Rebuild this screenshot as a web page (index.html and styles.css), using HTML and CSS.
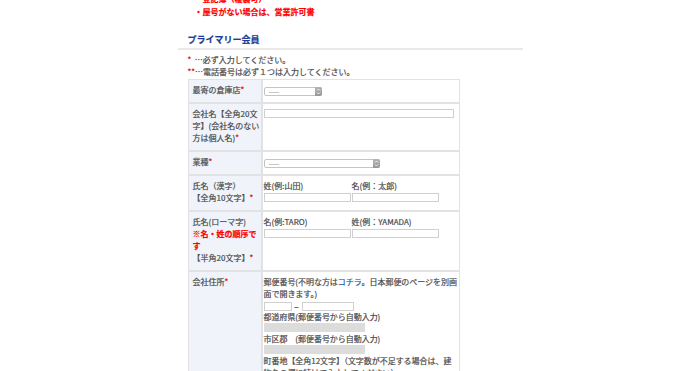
FILE: index.html
```html
<!DOCTYPE html>
<html lang="ja">
<head>
    <meta charset="UTF-8">
    <meta name="viewport" content="width=device-width, initial-scale=1.0">
    <title>会員登録 - プライマリー会員</title>
    <link rel="stylesheet" href="styles.css">
</head>
<body>
    <div class="page">
        <ul class="notice">
            <li>・登記簿（複製可）</li>
            <li>・屋号がない場合は、営業許可書</li>
        </ul>

        <h2 class="section-title">プライマリー会員</h2>

        <div class="notes">
            <p><span class="req">*</span>&nbsp;&nbsp;…必ず入力してください。</p>
            <p><span class="req">**</span>…電話番号は必ず１つは入力してください。</p>
        </div>

        <table class="form-table">
            <colgroup>
                <col class="col-label">
                <col>
            </colgroup>
            <tr>
                <th>最寄の倉庫店<span class="req">*</span></th>
                <td>
                    <span class="select select-short">
                        <select><option>------</option></select>
                        <span class="select-arrow">
                            <svg width="7" height="9" viewBox="0 0 7 9"><path d="M2 3.5 L3.5 2 L5 3.5 M2 5.5 L3.5 7 L5 5.5" fill="none" stroke="#fff" stroke-width="0.8"/></svg>
                        </span>
                    </span>
                </td>
            </tr>
            <tr>
                <th>会社名【全角20文字】(会社名のない方は個人名)<span class="req">*</span></th>
                <td><input type="text" class="field field-wide"></td>
            </tr>
            <tr>
                <th>業種<span class="req">*</span></th>
                <td>
                    <span class="select select-long">
                        <select><option>------</option></select>
                        <span class="select-arrow">
                            <svg width="7" height="9" viewBox="0 0 7 9"><path d="M2 3.5 L3.5 2 L5 3.5 M2 5.5 L3.5 7 L5 5.5" fill="none" stroke="#fff" stroke-width="0.8"/></svg>
                        </span>
                    </span>
                </td>
            </tr>
            <tr>
                <th>氏名（漢字）<br>【全角10文字】<span class="req">*</span></th>
                <td>
                    <div class="name-grid">
                        <span>姓(例:山田)</span>
                        <span>名(例：太郎)</span>
                        <input type="text" class="field">
                        <input type="text" class="field">
                    </div>
                </td>
            </tr>
            <tr>
                <th>氏名(ローマ字)<br><span class="warn">※名・姓の順序です</span><br>【半角20文字】<span class="req">*</span></th>
                <td>
                    <div class="name-grid">
                        <span>名(例:TARO)</span>
                        <span>姓(例：YAMADA)</span>
                        <input type="text" class="field">
                        <input type="text" class="field">
                    </div>
                </td>
            </tr>
            <tr>
                <th>会社住所<span class="req">*</span></th>
                <td>
                    <p class="line">郵便番号(不明な方は<a href="#" class="link">コチラ</a>。日本郵便のページを別画面で開きます。)</p>
                    <div class="zip">
                        <input type="text" class="field zip-first">
                        <span class="zip-dash">−</span>
                        <input type="text" class="field zip-second">
                    </div>
                    <p class="line">都道府県(郵便番号から自動入力)</p>
                    <div class="readonly"></div>
                    <p class="line">市区郡　(郵便番号から自動入力)</p>
                    <div class="readonly"></div>
                    <p class="line">町番地【全角12文字】（文字数が不足する場合は、建物名の欄に続けて入力してください）</p>
                    <input type="text" class="field field-wide">
                </td>
            </tr>
        </table>
    </div>
</body>
</html>
```

FILE: styles.css
```css
* {
    box-sizing: border-box;
}
body {
    margin: 0;
    background: #fff;
    color: #4a4a4a;
    font-family: "Noto Sans CJK JP", sans-serif;
    font-size: 8px;
    line-height: 12px;
    -webkit-text-stroke: 0.2px currentColor;
}
.page {
    width: 345px;
    margin: 0 auto;
}
.notice {
    list-style: none;
    margin: -8px 0 0;
    padding: 0 0 0 17px;
    color: #f00;
    font-weight: bold;
    line-height: 13px;
}
.section-title {
    margin: 15px 0 0;
    padding: 0 0 1px 10px;
    font-size: 9px;
    line-height: 14px;
    color: #1c3d94;
    border-bottom: 2px solid #e9e9e9;
}
.notes {
    margin: 4px 0 1px;
    padding-left: 10px;
}
.notes p {
    margin: 0;
}
.req {
    color: #e60000;
}
.warn {
    color: #f00;
    font-weight: bold;
}
.form-table {
    width: 272px;
    margin-left: 10px;
    border-collapse: separate;
    border-spacing: 0;
    table-layout: fixed;
}
.col-label {
    width: 74px;
}
.form-table th,
.form-table td {
    border: 1px solid #e2e2e2;
    vertical-align: top;
    text-align: left;
}
.form-table th {
    padding: 4px 0 6px 4px;
    background: #f0f3f9;
    font-weight: normal;
}
.form-table td {
    padding: 4px 1px 6px 1px;
}
.select {
    position: relative;
    display: block;
    height: 9px;
    margin-top: 3px;
}
.select-short { width: 58px; }
.select-long { width: 116px; }
.select select {
    appearance: none;
    -webkit-appearance: none;
    display: block;
    width: 100%;
    height: 9px;
    margin: 0;
    padding: 0 0 0 4px;
    border: 1px solid #c4c4c4;
    border-radius: 2px;
    background: #fff;
    color: #888;
    font-family: inherit;
    font-size: 5px;
    line-height: 7px;
}
.select-arrow {
    position: absolute;
    top: 0;
    right: 0;
    width: 7px;
    height: 9px;
    border-radius: 0 2px 2px 0;
    background: linear-gradient(#b4b4b4, #979797);
}
.select-arrow svg {
    display: block;
}
.field {
    display: block;
    height: 9px;
    margin: 1px 0 0;
    padding: 0;
    border: 1px solid #d0d0d0;
    background: #fff;
}
.field-wide {
    width: 190px;
}
.name-grid {
    display: grid;
    grid-template-columns: 88px 88px;
}
.name-grid .field {
    width: 87px;
}
.line {
    margin: 0;
    word-break: break-all;
    letter-spacing: -0.04px;
}
.link {
    color: #1f5aa6;
    text-decoration: none;
}
.zip {
    display: flex;
    align-items: center;
    height: 9px;
    margin-top: 2px;
}
.zip .field {
    margin: 0;
}
.zip-first { width: 28px; }
.zip-second { width: 52px; }
.zip-dash {
    width: 10px;
    text-align: center;
    color: #333;
}
.readonly {
    width: 101px;
    height: 9px;
    margin-bottom: 1px;
    background: #dcdcdc;
}
```
